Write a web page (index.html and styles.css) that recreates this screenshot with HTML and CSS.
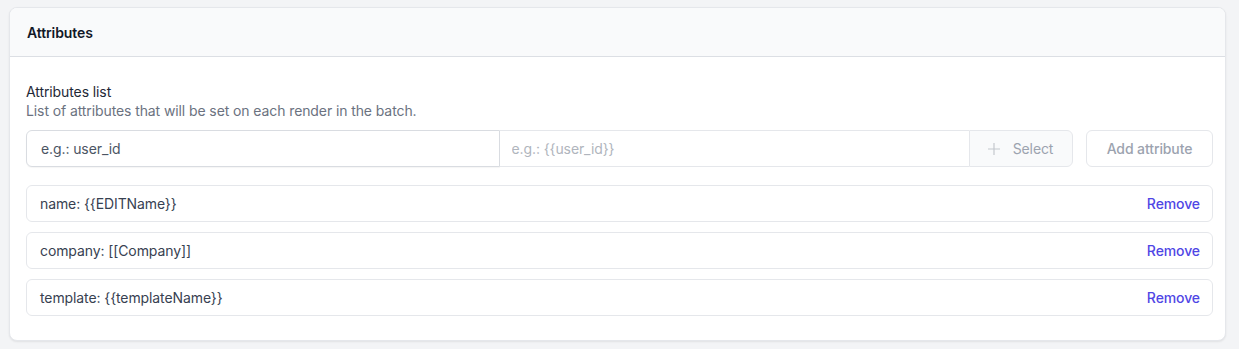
FILE: index.html
```html
<!DOCTYPE html>
<html>
<head>
	<title>Attributes</title>
	<meta charset="utf-8">
	<meta name="viewport" content="width=device-width, initial-scale=1">
	<link rel="stylesheet" href="styles.css">
</head>
<body>
<div class="card">
	<div class="card-head">
		<h2>Attributes</h2>
	</div>
	<div class="card-body">
		<div class="label">Attributes list</div>
		<div class="hint">List of attributes that will be set on each render in the batch.</div>
		<div class="add-row">
			<div class="group">
				<input class="key" type="text" placeholder="e.g.: user_id">
				<input class="val" type="text" placeholder="e.g.: {{user_id}}">
				<button class="select" disabled>
					<svg width="14" height="14" viewBox="0 0 14 14"><path d="M7 1v12M1 7h12" stroke="currentColor" stroke-width="1.2" fill="none"/></svg>
					Select
				</button>
			</div>
			<button class="add" disabled>Add attribute</button>
		</div>
		<ul class="attrs">
			<li><span>name: {{EDITName}}</span><a class="remove">Remove</a></li>
			<li><span>company: [[Company]]</span><a class="remove">Remove</a></li>
			<li><span>template: {{templateName}}</span><a class="remove">Remove</a></li>
		</ul>
	</div>
</div>
</body>
</html>
```

FILE: styles.css
```css
body {
	margin: 0;
	padding: 7px 13px 8px 9px;
	background-color: #f3f4f6;
	font-family: Inter, "Liberation Sans", sans-serif;
	font-size: 14px;
	letter-spacing: -0.1px;
	color: #111827;
}
.card {
	background: #fff;
	border: 1px solid #e5e7eb;
	border-radius: 8px;
	box-shadow: 0 1px 2px rgba(0,0,0,0.08);
	overflow: hidden;
}
.card-head {
	background: #f9fafb;
	border-bottom: 1px solid #dcdfe4;
	height: 48px;
	display: flex;
	align-items: center;
	padding: 0 17px;
}
.card-head h2 {
	margin: 0;
	font-size: 14px;
	font-weight: 600;
	color: #111827;
}
.card-body {
	padding: 25px 12px 24px 16px;
}
.label {
	line-height: 20px;
	color: #1f2937;
}
.hint {
	line-height: 18px;
	color: #6b7280;
}
.add-row {
	display: flex;
	margin-top: 10px;
	gap: 13px;
}
.group {
	flex: 1;
	display: flex;
	height: 37px;
}
.group input {
	flex: 1;
	min-width: 0;
	border: 1px solid #e5e7eb;
	margin: 0;
	padding: 0 14px;
	font-family: inherit;
	font-size: 14px;
	letter-spacing: -0.1px;
	outline: none;
	background: #fff;
}
.group .key {
	border-color: #d9dce1;
	border-radius: 6px 0 0 6px;
	box-shadow: 0 1px 1px rgba(0,0,0,0.04);
}
.group .key::placeholder {
	color: #4b5563;
}
.group .val {
	border-left: none;
	border-right: none;
	padding-left: 12px;
}
.group .val::placeholder {
	color: #b0b5bd;
}
.select {
	width: 104px;
	display: flex;
	align-items: center;
	justify-content: center;
	gap: 12px;
	border: 1px solid #e5e7eb;
	border-radius: 0 6px 6px 0;
	background: #f9fafb;
	color: #9ca3af;
	font-family: inherit;
	font-size: 14px;
	letter-spacing: -0.1px;
	padding: 0 14px 0 12px;
}
.select svg {
	color: #c4c8ce;
}
.add {
	width: 127px;
	height: 37px;
	border: 1px solid #e5e7eb;
	border-radius: 6px;
	background: #fff;
	color: #9ca3af;
	font-family: inherit;
	font-size: 14px;
	letter-spacing: -0.1px;
	font-weight: 500;
}
.attrs {
	list-style: none;
	margin: 18px 0 0 0;
	padding: 0;
}
.attrs li {
	height: 35px;
	border: 1px solid #e5e7eb;
	border-radius: 6px;
	display: flex;
	align-items: center;
	justify-content: space-between;
	padding: 0 12px 0 13px;
	margin-bottom: 10px;
	color: #374151;
}
.attrs li:last-child {
	margin-bottom: 0;
}
.remove {
	color: #4f46e5;
	font-weight: 500;
	cursor: pointer;
}
```
